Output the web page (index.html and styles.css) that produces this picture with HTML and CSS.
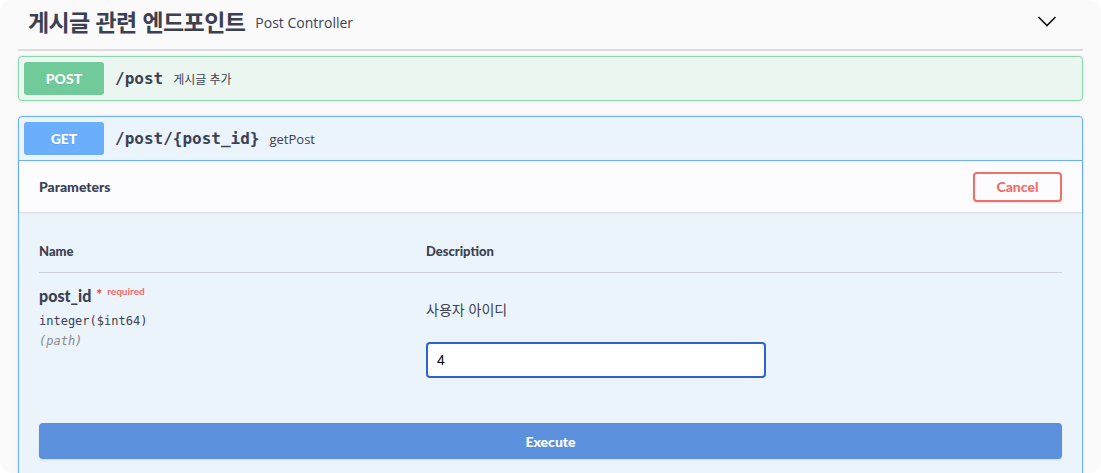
FILE: index.html
```html
<!DOCTYPE html>
<html lang="ko">
<head>
<meta charset="utf-8">
<title>Swagger</title>
<link rel="stylesheet" href="styles.css">
</head>
<body>
<div class="page">
  <div class="tag">
    <h3 class="tag-title"><span class="tag-name">게시글 관련 엔드포인트</span><small class="tag-desc">Post Controller</small></h3>
    <span class="toggle">
      <svg width="20" height="20" viewBox="0 0 20 20"><polyline points="1.5,6 10,14.5 18.5,6" fill="none" stroke="#111" stroke-width="1.6"/></svg>
    </span>
  </div>

  <div class="opblock opblock-post">
    <div class="summary">
      <span class="method">POST</span>
      <span class="path">/post</span>
      <span class="summary-text">게시글 추가</span>
    </div>
  </div>

  <div class="opblock opblock-get">
    <div class="summary summary-open">
      <span class="method">GET</span>
      <span class="path">/post/{post_id}</span>
      <span class="summary-text">getPost</span>
    </div>
    <div class="section-header">
      <h4 class="section-title">Parameters</h4>
      <button class="btn-cancel">Cancel</button>
    </div>
    <div class="params">
      <div class="param-head">
        <div class="col-name">Name</div>
        <div class="col-desc">Description</div>
      </div>
      <div class="param-row">
        <div class="col-name">
          <div class="param-name">post_id<span class="star">*</span><span class="required">required</span></div>
          <div class="param-type">integer($int64)</div>
          <div class="param-in">(path)</div>
        </div>
        <div class="col-desc">
          <p class="param-desc">사용자 아이디</p>
          <input class="param-input" type="text" value="4">
        </div>
      </div>
      <div class="execute-wrap">
        <button class="btn-execute">Execute</button>
      </div>
    </div>
  </div>
</div>
</body>
</html>
```

FILE: styles.css
```css
* { box-sizing: border-box; }
html, body { margin: 0; padding: 0; background: #ffffff; }
body { font-family: "Open Sans", "Noto Sans CJK KR", sans-serif; color: #3b4151; }

.page {
  width: 1101px;
  height: 473px;
  overflow: hidden;
  background: #fafafa;
  border-radius: 12px;
  padding: 0 18px;
}

.tag {
  display: flex;
  align-items: center;
  justify-content: space-between;
  height: 51px;
  padding: 0 26px 8px 10px;
  border-bottom: 2px solid #dcdcdc;
  margin-bottom: 5px;
}
.tag-title {
  margin: 0;
  display: flex;
  align-items: center;
  gap: 10px;
}
.tag-name {
  font-family: "Noto Sans CJK KR", sans-serif;
  font-weight: 700;
  font-size: 23px;
  color: #3b4151;
  letter-spacing: -0.6px;
}
.tag-desc {
  font-family: "Open Sans", sans-serif;
  font-size: 14px;
  font-weight: 400;
  color: #3b4151;
  margin-top: 3px;
}
.toggle { display: flex; margin-top: 0; }

.opblock {
  border: 1px solid;
  border-radius: 4px;
  margin-bottom: 15px;
  box-shadow: 0 0 3px rgba(0,0,0,.12);
}
.opblock-post { background: #ecf6f0; border-color: #8ad8b0; }
.opblock-get { background: #ebf3fb; border-color: #6aaefc; }

.summary {
  display: flex;
  align-items: center;
  padding: 5px;
}
.summary-open { border-bottom: 1px solid #6aaefc; }

.method {
  min-width: 80px;
  height: 33px;
  display: flex;
  align-items: center;
  justify-content: center;
  border-radius: 3px;
  color: #fff;
  font-family: "Lato", sans-serif;
  font-weight: 900;
  font-size: 14px;
  text-shadow: 0 1px 0 rgba(0,0,0,.08);
}
.opblock-post .method { background: #70ca99; }
.opblock-get .method { background: #6aaefc; }

.path {
  font-family: "DejaVu Sans Mono", monospace;
  font-weight: 700;
  font-size: 16px;
  color: #3b4151;
  padding: 0 10px;
  margin-left: 1px;
}
.summary-text {
  font-family: "Open Sans", "Noto Sans CJK KR", sans-serif;
  font-size: 13px;
  color: #3b4151;
}
.opblock-post .summary-text { font-size: 12px; }

.section-header {
  display: flex;
  align-items: center;
  justify-content: space-between;
  height: 51px;
  padding: 0 20px;
  background: #fcfcfe;
  box-shadow: 0 1px 2px rgba(0,0,0,.1);
}
.section-title {
  margin: 0;
  font-family: "Lato", sans-serif;
  font-weight: 900;
  font-size: 14px;
  color: #3b4151;
}
.btn-cancel {
  width: 89px;
  height: 30px;
  border: 2px solid #ef6f69;
  border-radius: 4px;
  background: transparent;
  color: #ef6f69;
  font-family: "Lato", sans-serif;
  font-weight: 900;
  font-size: 14px;
  box-shadow: 0 1px 2px rgba(0,0,0,.1);
  padding: 0;
}

.params { padding: 19px 20px 30px; }
.param-head, .param-row {
  display: grid;
  grid-template-columns: 387px 1fr;
}
.param-head {
  padding: 12px 0 12px;
  border-bottom: 1px solid #cdd0d8;
  font-family: "Lato", sans-serif;
  font-weight: 900;
  font-size: 13px;
  line-height: 17px;
}
.param-row { padding-top: 12px; }

.param-name {
  font-family: "Lato", sans-serif;
  font-weight: 900;
  font-size: 16px;
  line-height: 22px;
}
.star {
  color: #f03c3c;
  font-size: 14px;
  margin-left: 5px;
  position: relative;
  top: -3px;
}
.required {
  color: #f06c6c;
  font-size: 10px;
  font-weight: 700;
  position: relative;
  top: -7px;
  margin-left: 5px;
}
.param-type {
  margin-top: 4px;
  font-family: "DejaVu Sans Mono", monospace;
  font-size: 12px;
  line-height: 17px;
  font-weight: 400;
  color: #3b4151;
}
.param-in {
  margin-top: 3px;
  font-family: "DejaVu Sans Mono", monospace;
  font-size: 12px;
  line-height: 17px;
  font-style: italic;
  color: #8a8a8a;
}
.param-desc {
  margin: 14px 0 0;
  font-family: "Noto Sans CJK KR", sans-serif;
  font-size: 14px;
  line-height: 20px;
  color: #3b4151;
}
.param-input {
  display: block;
  margin-top: 23px;
  width: 340px;
  height: 36px;
  border: 2px solid #2d63c8;
  border-radius: 4px;
  background: #fff;
  padding: 0 9px;
  font-family: "Liberation Sans", Arial, sans-serif;
  font-size: 14px;
  color: #000;
  outline: none;
}

.execute-wrap { padding-top: 45px; }
.btn-execute {
  display: block;
  width: 100%;
  height: 36px;
  border: none;
  border-radius: 4px;
  background: #5b91dc;
  color: #fff;
  font-family: "Lato", sans-serif;
  font-weight: 900;
  font-size: 14px;
  box-shadow: 0 1px 2px rgba(0,0,0,.1);
}
```
